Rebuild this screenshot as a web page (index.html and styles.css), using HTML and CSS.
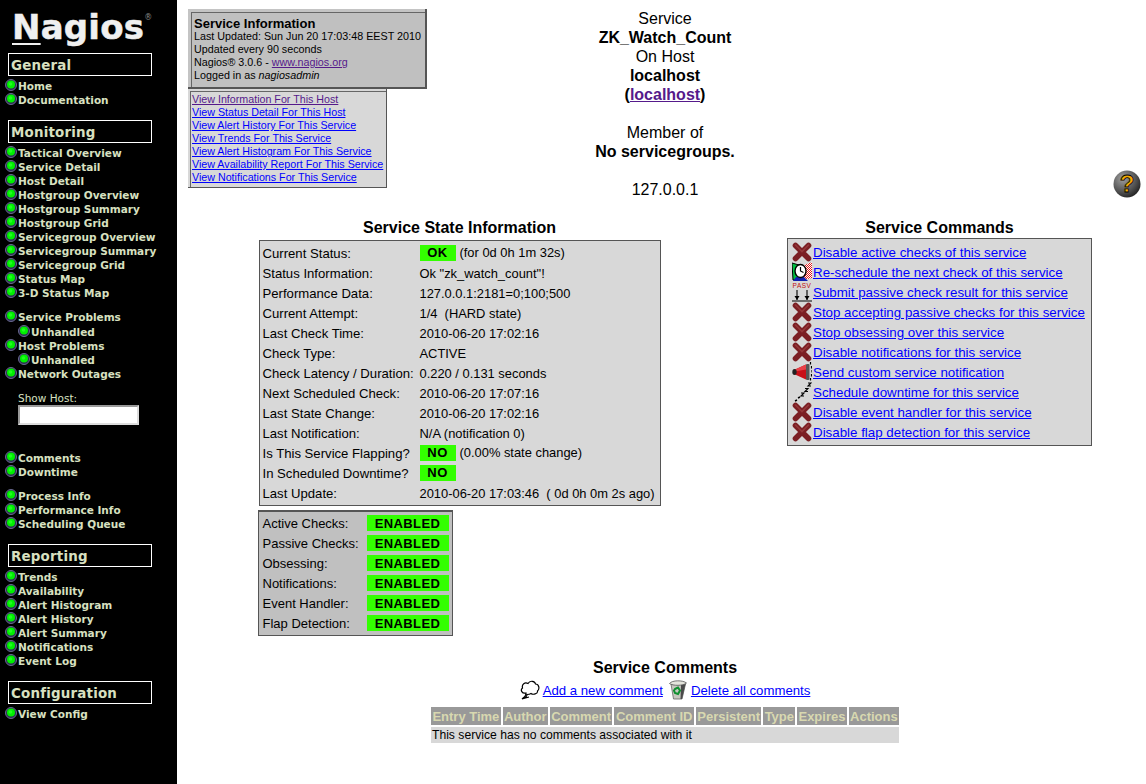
FILE: index.html
```html
<!DOCTYPE html>
<html lang="en">
<head>
<meta charset="utf-8">
<title>Nagios</title>
<link rel="stylesheet" href="styles.css">
</head>
<body>
<svg class="defs" width="0" height="0" aria-hidden="true">
  <defs>
    <symbol id="dot" viewBox="0 0 12 12">
      <circle cx="6" cy="6" r="5.5" fill="#2c2c50" stroke="#6a6a90" stroke-width="1"/>
      <circle cx="6" cy="5.6" r="4" fill="#00f000"/>
      <circle cx="5.5" cy="5" r="1.8" fill="#20ff20"/>
    </symbol>
    <symbol id="x" viewBox="0 0 20 20">
      <path d="M3.5 3.500 16.500 16.500M16.500 3.500 3.500 16.500" stroke="#7b1f24" stroke-width="5.600" stroke-linecap="round"/>
      <path d="M3.500 3 10 9.500 16.500 3" fill="none" stroke="#94383a" stroke-width="1.600" stroke-linecap="round"/>
    </symbol>
    <pattern id="chk" width="2" height="2" patternUnits="userSpaceOnUse">
      <rect width="2" height="2" fill="#fff"/>
      <rect width="1" height="1" fill="#e01818"/>
      <rect x="1" y="1" width="1" height="1" fill="#e01818"/>
    </pattern>
  </defs>
</svg>
<div class="page">
  <nav class="side">
    <div class="logo"><span class="logo-n">N</span>agios<span class="logo-r">®</span></div>
    <h2 class="sec sec-first">General</h2>
    <ul class="menu">
      <li><svg class="dot"><use href="#dot"/></svg>Home</li>
      <li><svg class="dot"><use href="#dot"/></svg>Documentation</li>
    </ul>
    <h2 class="sec">Monitoring</h2>
    <ul class="menu">
      <li><svg class="dot"><use href="#dot"/></svg>Tactical Overview</li>
      <li><svg class="dot"><use href="#dot"/></svg>Service Detail</li>
      <li><svg class="dot"><use href="#dot"/></svg>Host Detail</li>
      <li><svg class="dot"><use href="#dot"/></svg>Hostgroup Overview</li>
      <li><svg class="dot"><use href="#dot"/></svg>Hostgroup Summary</li>
      <li><svg class="dot"><use href="#dot"/></svg>Hostgroup Grid</li>
      <li><svg class="dot"><use href="#dot"/></svg>Servicegroup Overview</li>
      <li><svg class="dot"><use href="#dot"/></svg>Servicegroup Summary</li>
      <li><svg class="dot"><use href="#dot"/></svg>Servicegroup Grid</li>
      <li><svg class="dot"><use href="#dot"/></svg>Status Map</li>
      <li><svg class="dot"><use href="#dot"/></svg>3-D Status Map</li>
    </ul>
    <ul class="menu gap10">
      <li><svg class="dot"><use href="#dot"/></svg>Service Problems</li>
      <li class="sub sub-first"><svg class="dot"><use href="#dot"/></svg>Unhandled</li>
      <li><svg class="dot"><use href="#dot"/></svg>Host Problems</li>
      <li class="sub"><svg class="dot"><use href="#dot"/></svg>Unhandled</li>
      <li><svg class="dot"><use href="#dot"/></svg>Network Outages</li>
    </ul>
    <div class="show-host">
      <label class="show-label" for="host">Show Host:</label>
      <input class="show-input" id="host" type="text">
    </div>
    <ul class="menu">
      <li><svg class="dot"><use href="#dot"/></svg>Comments</li>
      <li><svg class="dot"><use href="#dot"/></svg>Downtime</li>
    </ul>
    <ul class="menu gap10">
      <li><svg class="dot"><use href="#dot"/></svg>Process Info</li>
      <li><svg class="dot"><use href="#dot"/></svg>Performance Info</li>
      <li><svg class="dot"><use href="#dot"/></svg>Scheduling Queue</li>
    </ul>
    <h2 class="sec">Reporting</h2>
    <ul class="menu">
      <li><svg class="dot"><use href="#dot"/></svg>Trends</li>
      <li><svg class="dot"><use href="#dot"/></svg>Availability</li>
      <li><svg class="dot"><use href="#dot"/></svg>Alert Histogram</li>
      <li><svg class="dot"><use href="#dot"/></svg>Alert History</li>
      <li><svg class="dot"><use href="#dot"/></svg>Alert Summary</li>
      <li><svg class="dot"><use href="#dot"/></svg>Notifications</li>
      <li><svg class="dot"><use href="#dot"/></svg>Event Log</li>
    </ul>
    <h2 class="sec">Configuration</h2>
    <ul class="menu">
      <li><svg class="dot"><use href="#dot"/></svg>View Config</li>
    </ul>
  </nav>

  <main class="main">
    <section class="top">
      <div class="top-left">
        <div class="info">
          <div class="info-in">
            <div class="info-title">Service Information</div>
            <div>Last Updated: Sun Jun 20 17:03:48 EEST 2010</div>
            <div>Updated every 90 seconds</div>
            <div>Nagios® 3.0.6 - <a class="visited" href="#">www.nagios.org</a></div>
            <div>Logged in as <i>nagiosadmin</i></div>
          </div>
        </div>
        <div class="nav-box">
          <ul class="nav-in">
            <li><a class="visited" href="#">View Information For This Host</a></li>
            <li><a href="#">View Status Detail For This Host</a></li>
            <li><a href="#">View Alert History For This Service</a></li>
            <li><a href="#">View Trends For This Service</a></li>
            <li><a href="#">View Alert Histogram For This Service</a></li>
            <li><a href="#">View Availability Report For This Service</a></li>
            <li><a href="#">View Notifications For This Service</a></li>
          </ul>
        </div>
      </div>
      <div class="top-mid">
        <div>Service</div>
        <div><b>ZK_Watch_Count</b></div>
        <div>On Host</div>
        <div><b>localhost</b></div>
        <div><b>(<a class="visited" href="#">localhost</a>)</b></div>
        <div class="spaced">Member of</div>
        <div><b>No servicegroups.</b></div>
        <div class="spaced">127.0.0.1</div>
      </div>
      <div class="top-right">
        <svg class="help" viewBox="0 0 28 28" role="img" aria-label="Help">
          <defs>
            <radialGradient id="hg" cx="35%" cy="30%" r="75%">
              <stop offset="0" stop-color="#a0a0a0"/>
              <stop offset="0.7" stop-color="#4c4c4c"/>
              <stop offset="1" stop-color="#222"/>
            </radialGradient>
          </defs>
          <circle cx="14" cy="14" r="13.500" fill="url(#hg)"/>
          <text x="14" y="22" text-anchor="middle" class="help-q">?</text>
        </svg>
      </div>
    </section>

    <section class="cols">
      <div class="col-state">
        <h3 class="head">Service State Information</h3>
        <table class="state">
          <tr><td>Current Status:</td><td><span class="ok">OK</span>(for 0d 0h 1m 32s)</td></tr>
          <tr><td>Status Information:</td><td>Ok "zk_watch_count"!</td></tr>
          <tr><td>Performance Data:</td><td>127.0.0.1:2181=0;100;500</td></tr>
          <tr><td>Current Attempt:</td><td>1/4 &nbsp;(HARD state)</td></tr>
          <tr><td>Last Check Time:</td><td>2010-06-20 17:02:16</td></tr>
          <tr><td>Check Type:</td><td>ACTIVE</td></tr>
          <tr><td>Check Latency / Duration:</td><td>0.220&nbsp;/&nbsp;0.131 seconds</td></tr>
          <tr><td>Next Scheduled Check:</td><td>2010-06-20 17:07:16</td></tr>
          <tr><td>Last State Change:</td><td>2010-06-20 17:02:16</td></tr>
          <tr><td>Last Notification:</td><td>N/A (notification 0)</td></tr>
          <tr><td>Is This Service Flapping?</td><td><span class="ok">NO</span>(0.00% state change)</td></tr>
          <tr><td>In Scheduled Downtime?</td><td><span class="ok">NO</span></td></tr>
          <tr><td>Last Update:</td><td>2010-06-20 17:03:46&nbsp; ( 0d 0h 0m 2s ago)</td></tr>
        </table>
        <div class="checks-wrap">
          <table class="checks">
            <tr><td>Active Checks:</td><td><span class="en">ENABLED</span></td></tr>
            <tr><td>Passive Checks:</td><td><span class="en">ENABLED</span></td></tr>
            <tr><td>Obsessing:</td><td><span class="en">ENABLED</span></td></tr>
            <tr><td>Notifications:</td><td><span class="en">ENABLED</span></td></tr>
            <tr><td>Event Handler:</td><td><span class="en">ENABLED</span></td></tr>
            <tr><td>Flap Detection:</td><td><span class="en">ENABLED</span></td></tr>
          </table>
        </div>
      </div>
      <div class="col-cmd">
        <h3 class="head">Service Commands</h3>
        <ul class="cmds">
          <li><svg class="ic"><use href="#x"/></svg><a href="#">Disable active checks of this service</a></li>
          <li>
            <svg class="ic" viewBox="0 0 20 20">
              <path d="M0 1 7 3v15H1z" fill="#00c040" stroke="#000" stroke-width="1"/>
              <path d="M10 4 20 0v16l-9 2z" fill="url(#chk)"/>
              <path d="M1 19 4 15h8l4 4z" fill="#1020b0"/>
              <ellipse cx="8.500" cy="9" rx="5.500" ry="6.500" fill="#fff" stroke="#000" stroke-width="1.400"/>
              <path d="M8.500 5v4l3 1.500" fill="none" stroke="#000" stroke-width="1.200"/>
            </svg><a href="#">Re-schedule the next check of this service</a>
          </li>
          <li>
            <svg class="ic" viewBox="0 0 20 20">
              <text x="10" y="6" text-anchor="middle" class="pasv">PASV</text>
              <path d="M5 8v10M15 8v10M0 19h20" stroke="#000" stroke-width="1.100" fill="none"/>
              <path d="M2.500 14 5 18 7.500 14zM12.500 14 15 18 17.500 14z" fill="#000"/>
            </svg><a href="#">Submit passive check result for this service</a>
          </li>
          <li><svg class="ic"><use href="#x"/></svg><a href="#">Stop accepting passive checks for this service</a></li>
          <li><svg class="ic"><use href="#x"/></svg><a href="#">Stop obsessing over this service</a></li>
          <li><svg class="ic"><use href="#x"/></svg><a href="#">Disable notifications for this service</a></li>
          <li>
            <svg class="ic" viewBox="0 0 20 20">
              <path d="M3 7.500 14 2.500v15L3 12.500z" fill="#c81018"/>
              <path d="M3 7.500 14 2.500v5L3 9.500z" fill="#e84048"/>
              <ellipse cx="2.500" cy="10" rx="2.200" ry="3" fill="#222"/>
              <rect x="14" y="2" width="3.500" height="16" rx="1" fill="#555"/>
              <path d="M18.500 0v2.500M19.500 4v2.500M20 8v2.500M19.500 12v2.500M18.500 16v2.500" stroke="#000" stroke-width="1.200"/>
            </svg><a href="#">Send custom service notification</a>
          </li>
          <li>
            <svg class="ic" viewBox="0 0 20 20">
              <path d="M3 19l2-1M6 16l2-1" stroke="#000" stroke-width="1.400"/>
              <path d="M9 11h3l-3 3h3M13 6.500h3l-3 3h3M16 1h3l-3 3h3" fill="none" stroke="#000" stroke-width="1.100"/>
            </svg><a href="#">Schedule downtime for this service</a>
          </li>
          <li><svg class="ic"><use href="#x"/></svg><a href="#">Disable event handler for this service</a></li>
          <li><svg class="ic"><use href="#x"/></svg><a href="#">Disable flap detection for this service</a></li>
        </ul>
      </div>
    </section>

    <section class="comments">
      <h3 class="head">Service Comments</h3>
      <div class="comment-links">
        <svg class="c-ic" viewBox="0 0 20 20">
          <path d="M6 13C2 14 0 10 2.500 8 1.500 4 5 2 8 3.500 10 0 15 1 15.500 4 19 4 20 9 17.500 11 18 14 13 15 11 13.500 9.500 14.500 8.500 14.500 7 14.500 7 16 5 18 2 19 4 17.500 6.500 16 6 13ZM2 19 9 17" fill="#fff" stroke="#000" stroke-width="1.200"/>
        </svg>
        <a href="#">Add a new comment</a>
        <svg class="c-ic" viewBox="0 0 20 20">
          <path d="M3 4 5.500 19H14L17.500 4z" fill="#c8c8c0" stroke="#666" stroke-width=".8"/>
          <path d="M13 5 12.500 19H14L17.500 4z" fill="#4a4a4a"/>
          <path d="M1.500 3.500C4 0 15 0 18.500 3 15 6 5 6 1.500 3.500z" fill="#e4e4dc" stroke="#555" stroke-width=".8"/>
          <path d="M7 9l3-1.500 2 3-2 3.500-3-1-1-2.500z" fill="none" stroke="#109030" stroke-width="2"/>
        </svg>
        <a href="#">Delete all comments</a>
      </div>
      <table class="ctable">
        <tr>
          <th>Entry Time</th><th>Author</th><th>Comment</th><th>Comment ID</th><th>Persistent</th><th>Type</th><th>Expires</th><th>Actions</th>
        </tr>
        <tr><td colspan="8">This service has no comments associated with it</td></tr>
      </table>
    </section>
  </main>
</div>
</body>
</html>
```

FILE: styles.css
```css
* { box-sizing: border-box; }
html, body { margin: 0; padding: 0; }
body {
  background: #fff;
  color: #000;
  font-family: "Liberation Sans", Arial, sans-serif;
  overflow: hidden;
}
.defs { position: absolute; }
a { color: #0000ff; }
a.visited { color: #551a8b; }
ul { list-style: none; margin: 0; padding: 0; }

.page { display: flex; height: 784px; }

/* Sidebar */
.side {
  flex: 0 0 177px;
  background: #000;
  color: #d8e0c0;
  font-family: "DejaVu Sans", Verdana, sans-serif;
}
.logo {
  height: 53px;
  padding: 1px 0 0 12px;
  color: #f0f0f0;
  font-size: 34px;
  line-height: 34px;
  font-weight: bold;
  white-space: nowrap;
  letter-spacing: .2px;
  -webkit-text-stroke: .5px #f0f0f0;
}
.logo-n {
  text-decoration: underline;
  text-decoration-thickness: 2px;
  text-underline-offset: 4px;
}
.logo-r { font-size: 8px; color: #888; vertical-align: 19px; font-weight: normal; letter-spacing: 0; -webkit-text-stroke: 0; }
.sec {
  margin: 13px 0 3px 8px;
  width: 144px;
  height: 23px;
  border: 1px solid #fff;
  padding-left: 2px;
  font-size: 13.400px;
  line-height: 23px;
  font-weight: bold;
  letter-spacing: .2px;
}
.sec-first { margin-top: 0; }
.menu { font-size: 10.500px; font-weight: bold; line-height: 14px; }
.menu li { display: flex; align-items: center; height: 14px; padding-left: 5px; white-space: nowrap; }
.menu li.sub { padding-left: 18px; }
.menu li.sub-first { margin-top: 1px; }
.menu.gap10 { margin-top: 10px; }
.dot { width: 12px; height: 12px; margin: -2px 1px 0 0; flex: none; }
.show-host { padding: 10px 0 26px 18px; }
.show-label { display: block; font-size: 10.500px; line-height: 14px; font-weight: normal; }
.show-input {
  display: block;
  width: 121px;
  height: 20px;
  border: 2px solid #aaa;
  border-color: #999 #ddd #ddd #999;
  background: #fff;
  padding: 0;
}

/* Main */
.main { flex: 1; min-width: 0; }
.top { display: flex; padding-top: 9px; height: 210px; }
.top-left { flex: 0 0 311px; padding-left: 11px; font-size: 10.700px; line-height: 13px; }
.info {
  width: 239px;
  height: 80px;
  padding: 3px 0 0 3px;
  background: #c4c4c4;
  border-right: 2px solid #555;
  border-bottom: 2px solid #555;
  font-size: 10.750px;
}
.info-in {
  height: 100%;
  padding: 4px 0 0 2px;
  background: #c0c0c0;
  border-top: 1px solid #666;
  border-left: 1px solid #666;
  white-space: nowrap;
}
.info-title { font-size: 13px; font-weight: bold; line-height: 13px; }
.nav-box {
  width: 199px;
  height: 99px;
  padding: 2px 0 0 2px;
  background: #d8d8d8;
  border-right: 1px solid #555;
  border-bottom: 1px solid #555;
}
.nav-in {
  height: 100%;
  padding: 1px 0 0 1px;
  border-top: 1px solid #666;
  border-left: 1px solid #666;
  white-space: nowrap;
}
.top-mid { flex: 0 0 354px; text-align: center; font-size: 16px; line-height: 19px; }
.spaced { margin-top: 19px; }
.top-right { flex: 1; display: flex; justify-content: flex-end; align-items: flex-end; padding: 0 5px 12px 0; }
.help { width: 28px; height: 28px; }
.help-q { font: bold 24px "Liberation Sans", Arial, sans-serif; fill: #f5a800; stroke: #000; stroke-width: .8px; }

.cols { display: flex; height: 448px; padding-top: 8px; }
.col-state { flex: 0 0 565px; display: flex; flex-direction: column; align-items: center; }
.col-cmd { flex: 0 0 395px; display: flex; flex-direction: column; align-items: center; }
.head { margin: 0; font-size: 16px; line-height: 20px; font-weight: bold; text-align: center; }
table { border-collapse: separate; border-spacing: 0; font-size: 13px; }
td { padding: 0; }
.state {
  margin-top: 2px;
  background: #d8d8d8;
  border: 1px solid #555;
  padding: 2px 3px;
  width: 402px;
  font-size: 12.900px;
  table-layout: fixed;
}
.state td { height: 20px; white-space: nowrap; }
.state td:first-child { width: 157px; font-size: 13.150px; }
.ok {
  display: inline-block;
  width: 36px;
  height: 16px;
  line-height: 16px;
  margin-right: 4px;
  background: #33ff00;
  font-size: 13px;
  font-weight: bold;
  text-align: center;
  letter-spacing: .5px;
}
.checks-wrap { width: 402px; margin-top: 4px; }
.checks {
  margin-left: -1px;
  background: #c0c0c0;
  border: 1px solid #555;
  border-top-width: 2px;
  padding: 1px 3px 2px 4px;
}
.checks td { height: 20px; white-space: nowrap; }
.checks td:first-child { width: 104px; }
.en {
  display: block;
  width: 82px;
  height: 16px;
  line-height: 17px;
  background: #33ff00;
  font-weight: bold;
  text-align: center;
  letter-spacing: .4px;
}
.cmds {
  width: 305px;
  height: 208px;
  background: #d8d8d8;
  border: 1px solid #555;
  padding: 3px 0 0 4px;
  font-size: 13.330px;
}
.cmds li { display: flex; align-items: center; height: 20px; white-space: nowrap; }
.ic { width: 20px; height: 20px; margin-right: 1px; flex: none; }
.pasv { font: 6.500px "Liberation Sans", Arial, sans-serif; fill: #c01010; letter-spacing: .5px; }

.comments { display: flex; flex-direction: column; align-items: center; padding-left: 7px; }
.comment-links { display: flex; align-items: center; height: 24px; font-size: 13.200px; gap: 3px; margin-top: 0; }
.comment-links a + svg { margin-left: 2px; }
.c-ic { width: 20px; height: 20px; }
.ctable { margin-top: 3px; border-spacing: 2px; width: 472px; }
.ctable th {
  background: #999;
  color: #d8d8b0;
  font-size: 13px;
  font-weight: bold;
  height: 18px;
  padding: 0 1px;
  white-space: nowrap;
}
.ctable td { background: #d8d8d8; font-size: 12.150px; height: 16px; padding-left: 1px; }
```
